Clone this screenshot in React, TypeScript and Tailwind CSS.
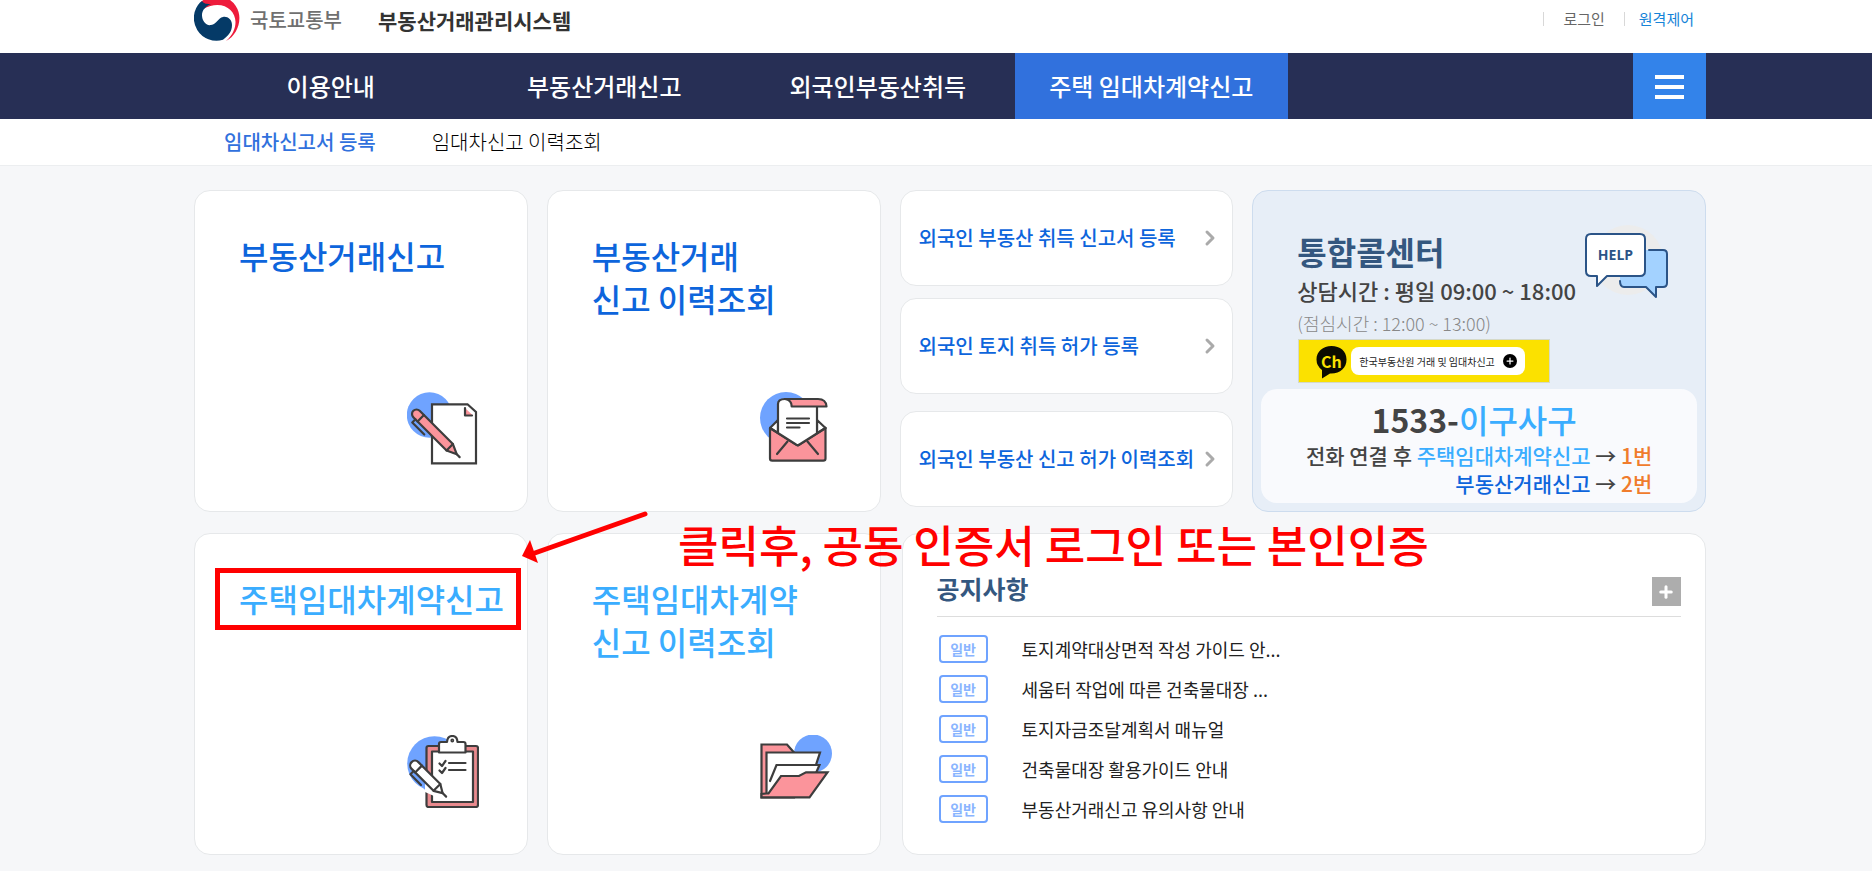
import type { ReactNode } from "react";
import { ChevronRight, Plus } from "lucide-react";

const NAV_ITEMS = ["이용안내", "부동산거래신고", "외국인부동산취득", "주택 임대차계약신고"];

const FOREIGNER_LINKS = [
  "외국인 부동산 취득 신고서 등록",
  "외국인 토지 취득 허가 등록",
  "외국인 부동산 신고 허가 이력조회",
];

const NOTICES = [
  "토지계약대상면적 작성 가이드 안...",
  "세움터 작업에 따른 건축물대장 ...",
  "토지자금조달계획서 매뉴얼",
  "건축물대장 활용가이드 안내",
  "부동산거래신고 유의사항 안내",
];

function GovLogo() {
  return (
    <svg width="46" height="41" viewBox="0 0 46 41" aria-hidden="true">
      <path
        d="M7.5 1.500A22.700 22.700 0 0 1 45.400 18C45.400 28 40 37 32 41C39 35 41.500 28 41.500 22C41.500 9 27 -1 9 9Z"
        fill="#ee1c3c"
      />
      <path
        d="M6 2.500A22.700 22.700 0 0 0 29 39.800C34 36 38 32 38 25C38 19 33 16 29 17C24 18 23 24 17 25C12 26 8 21 8 15C8 10 12 6 17 4C13 4 10 4 8 1Z"
        fill="#053a67"
      />
    </svg>
  );
}

function Icon({ children }: { children: ReactNode }) {
  return (
    <svg
      width="72"
      height="73"
      viewBox="0 0 72 73"
      fill="none"
      stroke="#3d3d3d"
      strokeWidth="2.2"
      strokeLinejoin="round"
      strokeLinecap="round"
      className="mr-12 self-end"
      aria-hidden="true"
    >
      {children}
    </svg>
  );
}

function PaperPenIcon() {
  return (
    <Icon>
      <circle cx="22.5" cy="23" r="22.7" fill="#6fa3ff" stroke="none" />
      <path d="M25 12.3H60.5L69 20V71.3H25Z" fill="#fff" strokeLinejoin="miter" />
      <path d="M58 16V23.5H66Z" fill="#fb949b" stroke="none" />
      <path d="M58 16V23.5H65" />
      <g transform="translate(9.5 22) rotate(45)">
        <path d="M0 -4.5H47L57 0L47 4.5H0A4.5 4.5 0 0 1 0 -4.5Z" fill="#fb949b" />
        <path d="M6 -4.5V4.5M47 -4.5V4.5M57 0H61" />
        <path d="M3 4.5V9H20" />
      </g>
    </Icon>
  );
}

function LetterIcon() {
  return (
    <Icon>
      <circle cx="26" cy="26" r="26" fill="#6fa3ff" stroke="none" />
      <path d="M10 36L18 28V45ZM65.5 36L57 28V45Z" fill="#fff" />
      <path d="M10 36L37.7 53.5L65.5 36V66.5Q65.5 68.7 63.3 68.7H12.2Q10 68.7 10 66.5Z" fill="#fb949b" />
      <path
        d="M18 41V12Q18 7 25 7Q31.7 8 31.7 14.5H57V41L39.5 52.5Q37.7 53.8 36 52.5Z"
        fill="#fff"
        stroke="none"
      />
      <path d="M18 41V12Q18 7 25 7M57 14.5V41M10 36L36 52.5Q37.7 53.8 39.5 52.5L65.5 36" />
      <path d="M25 7H58Q66 7 66.5 14.5H31.7Q31.7 8 25 7Z" fill="#fb949b" />
      <path d="M27 26.5H49M27 31H49M27 35.5H39.5M27.5 49.5L17 62M47.5 49.5L58 62" />
    </Icon>
  );
}

function ClipboardIcon() {
  return (
    <Icon>
      <circle cx="27.5" cy="28.5" r="27.3" fill="#6fa3ff" stroke="none" />
      <rect x="19.5" y="11" width="51.5" height="61" rx="2" fill="#e98a8e" />
      <rect x="25" y="16.5" width="41" height="50.5" fill="#fff" />
      <path
        d="M32 17.5V9Q32 7 34 7H40Q40.5 1 45.3 1T50.5 7H56.5Q58.5 7 58.5 9V17.5Z"
        fill="#fff"
      />
      <circle cx="45.3" cy="5.5" r="0.8" />
      <path d="M32.5 28.5L35 31L38.5 26M32.5 35.5L35 38L38.5 33M42 28H58.5M42 35H58.5" />
      <path d="M18 33V57L27 61V43Z" fill="#fff" stroke="none" />
      <path d="M18 33V55L9 42Z" fill="#6fa3ff" stroke="none" />
      <g transform="translate(8 30.5) rotate(45)">
        <path d="M0 -4.8H31L39 0L31 4.8H0A4.8 4.8 0 0 1 0 -4.8Z" fill="#fff" />
        <path d="M5 -4.8V4.8M31 -4.8V4.8M39 0H44" />
        <path d="M3 4.8V9.5H18" />
      </g>
    </Icon>
  );
}

function FolderIcon() {
  return (
    <Icon>
      <circle cx="53" cy="18.5" r="19" fill="#6fa3ff" stroke="none" />
      <g strokeLinejoin="miter">
        <path d="M1.5 9.5H27L34 17.5V62.3H1.5Z" fill="#fb949b" />
        <path d="M6.5 17.5H60L54 36L8 59H6.5Z" fill="#fff" />
        <path d="M21 41L8 59V50L16.5 30H59.5L56 38Z" fill="#fff" stroke="none" />
        <path d="M10 46L16.5 30H59.5L56 38" />
        <path d="M6.500 58.500H8.500L21 41H39L46 37.300H67.500L49.500 62.300H1.500V59Z" fill="#fb949b" />
      </g>
    </Icon>
  );
}

function HelpIcon() {
  return (
    <svg
      width="84"
      height="74"
      viewBox="0 0 84 74"
      fill="none"
      stroke="#2b5487"
      strokeWidth="2"
      strokeLinejoin="round"
      strokeLinecap="round"
      role="img"
      aria-label="HELP"
      className="mt-0.5 shrink-0"
    >
      <circle cx="43" cy="35" r="35" fill="#ececec" stroke="none" />
      <path d="M60 25H78Q82 25 82 29V58Q82 62 78 62H71V72L61 62H39Q35 62 35 56V51H60Z" fill="#a3d2ff" stroke="none" />
      <path d="M64 25H78Q82 25 82 29V58Q82 62 78 62H71V72L61 62H39Q35 62 35 56" />
      <path d="M6 9H55Q60 9 60 14V46Q60 51 55 51H22L12 61V51H6Q1 51 1 46V14Q1 9 6 9Z" fill="#fff" />
      <text
        x="30.5"
        y="35"
        textAnchor="middle"
        fontSize="14"
        fontWeight="700"
        fill="#2b5487"
        stroke="none"
        className="font-['Open_Sans',sans-serif]"
      >
        HELP
      </text>
    </svg>
  );
}

function KakaoBanner() {
  return (
    <a href="#" className="ml-px flex h-11 w-[252px] items-center gap-1 border border-[#d5d9c8] bg-[#fbe100] pl-4">
      <span className="relative flex h-8 w-8 items-center justify-center">
        <svg width="32" height="34" viewBox="0 0 32 34" className="absolute left-0 top-0" aria-hidden="true">
          <path d="M16.5 1C8 1 1.5 6.5 1.5 14.5Q1.5 21 7 25V33.5L15 28.5C25 29 31.5 23 31.5 14.500S25 1 16.5 1Z" fill="#0b0b00" />
        </svg>
        <span className="relative text-base leading-8 font-bold text-[#fbe100]">Ch</span>
      </span>
      <span className="flex h-7 items-center gap-2 rounded-lg bg-white px-2 text-[10px] whitespace-nowrap text-[#222]">
        한국부동산원 거래 및 임대차신고
        <span className="flex h-3.5 w-3.5 items-center justify-center rounded-full bg-black text-white">
          <Plus size={10} strokeWidth={3} />
        </span>
      </span>
    </a>
  );
}

interface ServiceCardProps {
  lines: string[];
  icon: ReactNode;
  color: string;
  highlighted?: boolean;
}

function ServiceCard({ lines, icon, color, highlighted }: ServiceCardProps) {
  return (
    <a
      href="#"
      className="relative flex h-[322px] flex-col justify-between rounded-2xl border border-[#e6e8ea] bg-white pt-[43px] pb-[46px]"
    >
      <h2 className={`pl-11 text-[32px] leading-[43px] font-medium whitespace-nowrap ${color}`}>
        {lines.map((line) => (
          <span key={line} className="block">
            {line}
          </span>
        ))}
      </h2>
      {icon}
      {highlighted && <span className="absolute top-[34px] right-1.5 left-5 h-[62px] border-5 border-[#ff0000]" />}
    </a>
  );
}

export default function App() {
  return (
    <div className="min-h-screen bg-[#f6f7f9] font-['Noto_Sans_CJK_KR',sans-serif] text-black">
      <header className="bg-white pl-7">
        <div className="mx-auto flex h-[53px] max-w-[1512px] items-start justify-between">
          <a href="#" className="flex items-start">
            <GovLogo />
            <span className="ml-2.5 text-xl leading-10 font-medium text-[#707070]">국토교통부</span>
            <span className="ml-9 text-[21px] leading-10 font-bold text-[#333]">부동산거래관리시스템</span>
          </a>
          <div className="mr-3 flex items-center pt-[9px] text-[15px] leading-5">
            <span className="h-3.5 w-px bg-[#d8d8d8]" />
            <a href="#" className="px-[19px] text-[#666]">로그인</a>
            <span className="h-3.5 w-px bg-[#d8d8d8]" />
            <a href="#" className="pl-3.5 text-[#1683d8]">원격제어</a>
          </div>
        </div>
      </header>

      <nav className="bg-[#272f55] pl-7">
        <div className="mx-auto flex h-[66px] max-w-[1512px] justify-between">
          <ul className="grid w-[1094px] grid-cols-4 text-2xl font-medium text-white">
            {NAV_ITEMS.map((item, index) => (
              <li key={item}>
                <a
                  href="#"
                  className={`flex h-full items-center justify-center whitespace-nowrap ${
                    index === 3 ? "bg-[#3171dd]" : ""
                  }`}
                >
                  {item}
                </a>
              </li>
            ))}
          </ul>
          <button
            type="button"
            aria-label="전체메뉴"
            className="flex w-[73px] flex-col items-center justify-center gap-1.5 bg-[#3383ea] pt-px"
          >
            <span className="h-1 w-[29px] bg-white" />
            <span className="h-1 w-[29px] bg-white" />
            <span className="h-1 w-[29px] bg-white" />
          </button>
        </div>
      </nav>

      <div className="border-b border-[#eceef0] bg-white pl-7">
        <div className="mx-auto flex h-[46px] max-w-[1512px] items-center gap-14 pl-[30px] text-xl">
          <a href="#" className="font-medium text-[#3171dd]">임대차신고서 등록</a>
          <a href="#" className="font-light">임대차신고 이력조회</a>
        </div>
      </div>

      <main className="pt-6 pb-4 pl-7">
        <div className="relative mx-auto grid max-w-[1512px] grid-cols-[334fr_334fr_334fr_454fr] gap-x-[19px] gap-y-[21px]">
          <ServiceCard lines={["부동산거래신고"]} icon={<PaperPenIcon />} color="text-[#0d65dc]" />
          <ServiceCard lines={["부동산거래", "신고 이력조회"]} icon={<LetterIcon />} color="text-[#0d65dc]" />

          <ul className="flex flex-col gap-3">
            {FOREIGNER_LINKS.map((label) => (
              <li key={label} className="last:mt-[5px]">
                <a
                  href="#"
                  className="flex h-24 items-center justify-between rounded-2xl border border-[#e6e8ea] bg-white pr-2.5 pl-[18px] text-xl font-medium whitespace-nowrap text-[#0d65dc]"
                >
                  {label}
                  <ChevronRight size={24} strokeWidth={3} className="text-[#aaa]" />
                </a>
              </li>
            ))}
          </ul>

          <section className="flex flex-col justify-between rounded-2xl border border-[#cddcee] bg-[#e7eef7] px-2 pt-8 pb-2">
            <div className="flex justify-between pr-7 pl-9">
              <div className="whitespace-nowrap">
                <h2 className="pt-[7px] text-[32px] leading-[43px] font-bold text-[#34577f]">통합콜센터</h2>
                <p className="text-[22px] leading-[34px] font-medium text-[#444]">상담시간 : 평일 09:00 ~ 18:00</p>
                <p className="py-0.5 text-lg leading-7 font-light text-[#888]">(점심시간 : 12:00 ~ 13:00)</p>
                <KakaoBanner />
              </div>
              <HelpIcon />
            </div>
            <div className="flex h-[114px] flex-col items-center rounded-2xl bg-[#f9fafd] pt-2.5 whitespace-nowrap text-[#444]">
              <p className="pr-2.5 text-[32px] leading-10 font-bold">
                1533-<span className="font-medium text-[#3aadff]">이구사구</span>
              </p>
              <div className="pt-0.5 text-right text-[21px] leading-7 font-medium">
                <p>
                  전화 연결 후 <span className="text-[#3aadff]">주택임대차계약신고</span> →{" "}
                  <span className="text-[#f07c2c]">1번</span>
                </p>
                <p>
                  <span className="text-[#0d65dc]">부동산거래신고</span> → <span className="text-[#f07c2c]">2번</span>
                </p>
              </div>
            </div>
          </section>

          <ServiceCard lines={["주택임대차계약신고"]} icon={<ClipboardIcon />} color="text-[#3aadff]" highlighted />
          <ServiceCard lines={["주택임대차계약", "신고 이력조회"]} icon={<FolderIcon />} color="text-[#3aadff]" />

          <section className="col-span-2 ml-0.5 rounded-2xl border border-[#e6e8ea] bg-white px-6 pt-10">
            <div className="ml-2.5 flex items-end justify-between border-b border-[#ddd] pb-2.5">
              <h2 className="pb-1 text-[25px] leading-7 font-bold text-[#34577f]">공지사항</h2>
              <button
                type="button"
                aria-label="공지사항 더보기"
                className="flex h-[29px] w-[29px] items-center justify-center bg-[#adadad] text-white"
              >
                <Plus size={18} strokeWidth={4} />
              </button>
            </div>
            <ul className="mt-3 ml-3">
              {NOTICES.map((notice) => (
                <li key={notice} className="flex h-10 items-center text-lg">
                  <span className="flex h-7 w-[49px] items-center justify-center rounded-sm border-2 border-[#6fa3ff] text-sm font-bold text-[#8ab5ff]">
                    일반
                  </span>
                  <a href="#" className="ml-[34px] text-[#222]">
                    {notice}
                  </a>
                </li>
              ))}
            </ul>
          </section>

          {/* guide note drawn over the cards */}
          <svg
            width="126"
            height="56"
            viewBox="0 0 126 56"
            className="absolute top-[319px] left-[328px]"
            aria-hidden="true"
          >
            <path d="M123 5L10 45" stroke="#ff0000" strokeWidth="5" strokeLinecap="round" />
            <path d="M0 47L8 31L16 54Z" fill="#ff0000" />
          </svg>
          <p className="absolute top-[332px] left-[484px] text-[44px] leading-11 font-medium whitespace-nowrap text-[#ff0000]">
            클릭후, 공동 인증서 로그인 또는 본인인증
          </p>
        </div>
      </main>
    </div>
  );
}
